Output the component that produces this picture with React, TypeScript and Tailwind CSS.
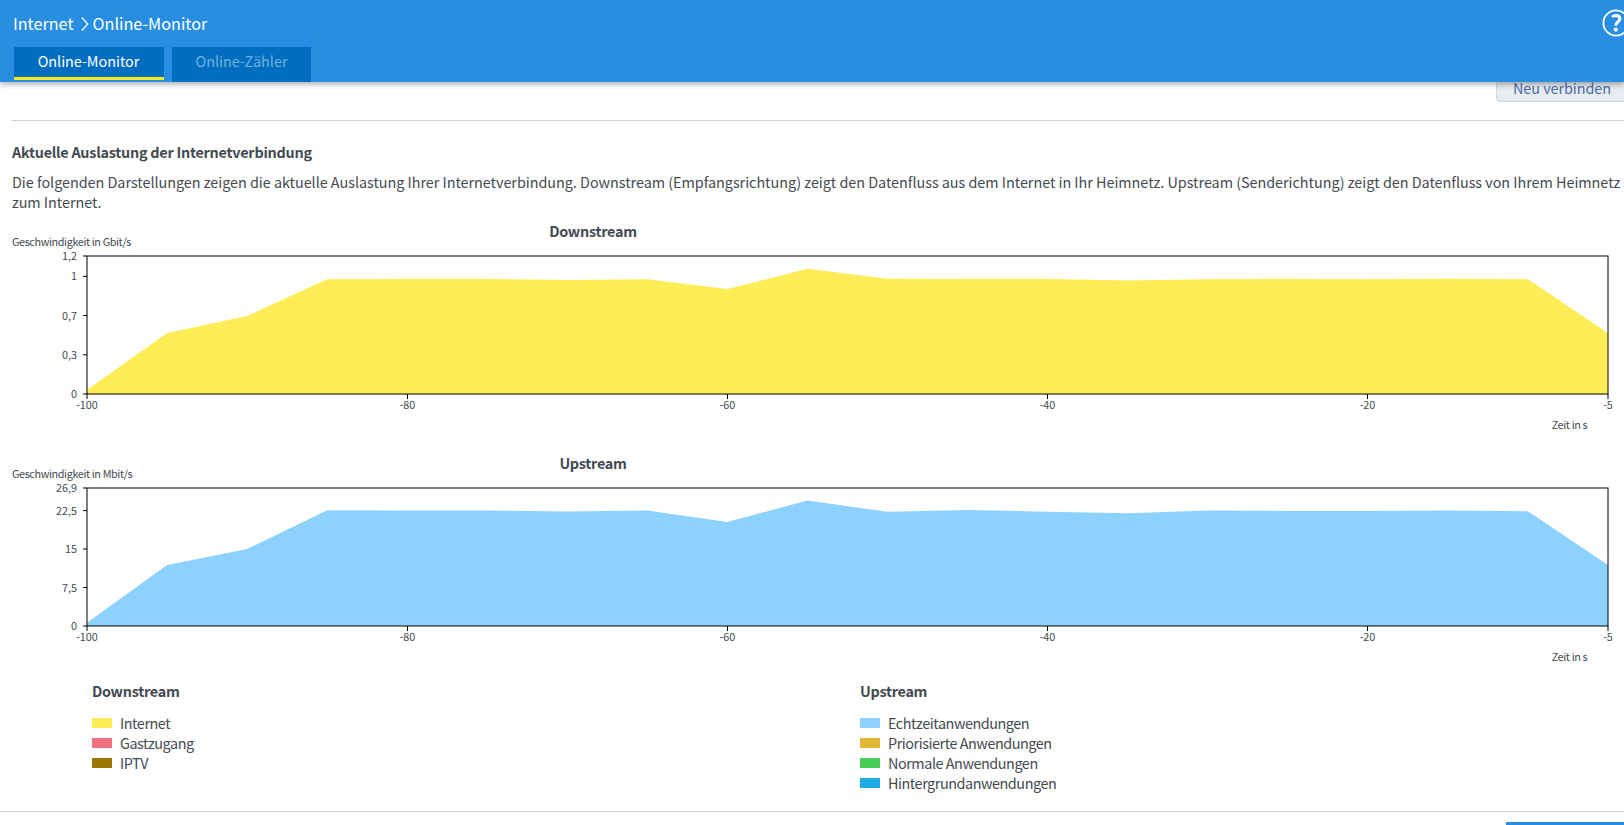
import React from "react";

type Tick = { at: number; label: string };

type ChartProps = {
  title: string;
  unit: string;
  fill: string;
  ticks: Tick[];
  values: number[];
};

const LEFT = 87;
const RIGHT = 1608;
const TOP = 40;
const BOTTOM = 178;

const timeTicks: Tick[] = [
  { at: 87, label: "-100" },
  { at: 407.5, label: "-80" },
  { at: 727.5, label: "-60" },
  { at: 1047.5, label: "-40" },
  { at: 1367.5, label: "-20" },
  { at: 1608, label: "-5" },
];

function Chart({ title, unit, fill, ticks, values }: ChartProps) {
  const step = (RIGHT - LEFT) / (values.length - 1);
  const line = values.map((y, i) => `${(LEFT + i * step).toFixed(2)},${y}`).join(" ");
  return (
    <svg width="1624" height="232" viewBox="0 0 1624 232" className="block shrink-0 fill-[#434a51] text-[10.8px]">
      <text x="593" y="21" textAnchor="middle" className="text-[14.4px] font-bold tracking-[-0.28px]">
        {title}
      </text>
      <text x="12" y="30" className="tracking-[-0.37px]">{unit}</text>
      <polygon points={`${LEFT},${BOTTOM} ${line} ${RIGHT},${BOTTOM}`} fill={fill} />
      <rect x={LEFT} y={TOP} width={RIGHT - LEFT} height={BOTTOM - TOP} fill="none" stroke="#000" />
      {ticks.map((t) => (
        <g key={t.label}>
          <path d={`M83 ${t.at}H87`} stroke="#000" />
          <text x="77" y={Math.round(t.at) + 4} textAnchor="end">{t.label}</text>
        </g>
      ))}
      {timeTicks.map((t) => (
        <g key={t.label}>
          <path d={`M${t.at} 178V183`} stroke="#000" />
          <text x={t.at} y="193" textAnchor="middle">{t.label}</text>
        </g>
      ))}
      <text x="1587.3" y="213" textAnchor="end" className="tracking-[-0.35px]">Zeit in s</text>
    </svg>
  );
}

function Legend({ title, items }: { title: string; items: { label: string; color: string }[] }) {
  return (
    <section className="w-[768px] shrink-0">
      <h3 className="mb-3 text-[14.4px] leading-5 font-bold tracking-[-0.28px]">{title}</h3>
      <ul>
        {items.map((item) => (
          <li key={item.label} className="flex h-5 items-start gap-2">
            <span className={`mt-[5px] h-2.5 w-5 ${item.color}`} />
            <span className="text-[14.4px] leading-5 tracking-[-0.45px]">{item.label}</span>
          </li>
        ))}
      </ul>
    </section>
  );
}

export default function App() {
  return (
    <div className="flex h-[825px] w-full flex-col overflow-hidden bg-white font-['Noto_Sans_CJK_SC',sans-serif] text-[#434a51]">
      <header className="z-10 flex h-[82px] shrink-0 flex-col bg-[#278ee1] text-white shadow-[0_2px_6px_rgba(0,0,0,0.35)]">
        <div className="flex h-[47px] shrink-0 items-center justify-between">
          <nav className="flex items-center pb-0.5 pl-[13px] text-[16.2px] leading-6">
            <span>Internet</span>
            <svg width="8" height="14" viewBox="0 0 8 14" className="mt-0.5 mr-1 ml-[7px]" fill="none" stroke="#fff" strokeWidth="1.3">
              <path d="M.8.5 6.8 7 .8 13.5" />
            </svg>
            <span>Online-Monitor</span>
          </nav>
          <svg width="28" height="28" viewBox="0 0 28 28" fill="none" stroke="#fff" className="-mr-1.5 mb-0.5">
            <circle cx="14" cy="14" r="12.6" strokeWidth="1.8" />
            <path d="M10.2 7.9C11.1 6.9 12.4 6.4 14 6.4c2.3 0 3.9 1.1 3.9 3.2 0 3.2-4.1 3.1-4.1 7.2" strokeWidth="3" />
            <circle cx="13.8" cy="20.6" r="2.1" fill="#fff" stroke="none" />
          </svg>
        </div>
        <div className="flex gap-2 pl-3.5 text-[14.4px] leading-7">
          <button className="h-[33px] w-[150px] border-b-[3px] border-[#ffe71d] bg-[#006ec0] pr-2 pb-0.5 pl-[7px] tracking-[-0.03px]">Online-Monitor</button>
          <button className="h-[35px] w-[139px] bg-[#006ec0] pb-[7px] text-[#73b0de]">Online-Zähler</button>
        </div>
      </header>
      <main className="flex flex-1 flex-col overflow-hidden">
        <div className="flex h-5 shrink-0 items-end justify-end">
          <button className="-mr-3.5 h-[35px] w-[142px] shrink-0 rounded border border-[#cfd8df] bg-[#e8ecef] pt-1.5 pl-4 text-left text-[14.4px] leading-6 tracking-[-0.05px] text-[#4a6dad]">
            Neu verbinden
          </button>
        </div>
        <hr className="mt-[18px] ml-3 border-[#d2d3d4]" />
        <div className="h-[95px] shrink-0 pt-[21px] pl-3">
          <h2 className="text-[14.4px] leading-5 font-bold tracking-[-0.25px]">Aktuelle Auslastung der Internetverbindung</h2>
          <p className="mt-2.5 text-[14.4px] leading-5 tracking-[-0.032px]">
            Die folgenden Darstellungen zeigen die aktuelle Auslastung Ihrer Internetverbindung. Downstream
            (Empfangsrichtung) zeigt den Datenfluss aus dem Internet in Ihr Heimnetz. Upstream (Senderichtung) zeigt den
            Datenfluss von Ihrem Heimnetz
            <br />
            zum Internet.
          </p>
        </div>
        <Chart
          title="Downstream"
          unit="Geschwindigkeit in Gbit/s"
          fill="#ffed57"
          ticks={[
            { at: 40, label: "1,2" },
            { at: 60.4, label: "1" },
            { at: 99.5, label: "0,7" },
            { at: 138.8, label: "0,3" },
            { at: 178, label: "0" },
          ]}
          values={[174, 117, 100, 63.2, 63, 63, 64, 63.2, 73, 52.8, 62.8, 62.9, 62.9, 64.5, 63.3, 62.9, 63.3, 62.8, 63.2, 117]}
        />
        <Chart
          title="Upstream"
          unit="Geschwindigkeit in Mbit/s"
          fill="#8dd2ff"
          ticks={[
            { at: 40, label: "26,9" },
            { at: 62.6, label: "22,5" },
            { at: 101, label: "15" },
            { at: 139.5, label: "7,5" },
            { at: 178, label: "0" },
          ]}
          values={[174.7, 117, 101, 62.3, 62.5, 62.5, 63.4, 62.5, 73.9, 52.5, 63.8, 62, 63.7, 65.3, 62.5, 62.9, 62.9, 62.6, 63.2, 117]}
        />
        <div className="flex h-[131px] shrink-0 pt-[1px] pl-[92px]">
          <Legend
            title="Downstream"
            items={[
              { label: "Internet", color: "bg-[#ffed57]" },
              { label: "Gastzugang", color: "bg-[#f3707f]" },
              { label: "IPTV", color: "bg-[#9c7800]" },
            ]}
          />
          <Legend
            title="Upstream"
            items={[
              { label: "Echtzeitanwendungen", color: "bg-[#8dd2ff]" },
              { label: "Priorisierte Anwendungen", color: "bg-[#e3b836]" },
              { label: "Normale Anwendungen", color: "bg-[#48cd58]" },
              { label: "Hintergrundanwendungen", color: "bg-[#1cabe2]" },
            ]}
          />
        </div>
        <footer className="flex shrink-0 justify-end border-t border-[#d2d3d4] pt-2.5">
          <div className="h-10 w-[118px] bg-[#278ee1]" />
        </footer>
      </main>
    </div>
  );
}
